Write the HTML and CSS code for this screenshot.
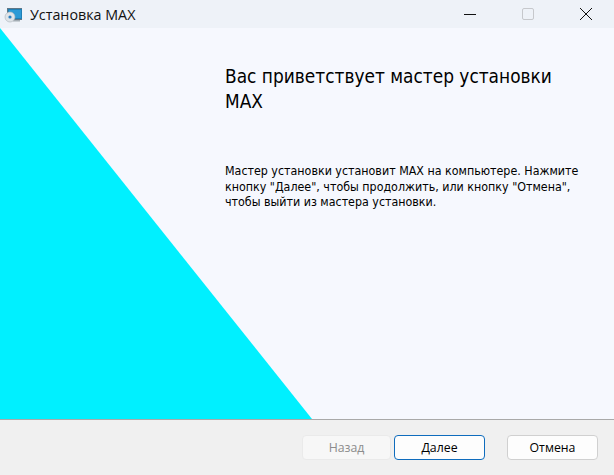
FILE: index.html
```html
<!DOCTYPE html>
<html lang="ru">
<head>
    <meta charset="UTF-8">
    <meta name="viewport" content="width=device-width, initial-scale=1.0">
    <title>Установка MAX</title>
    <link rel="stylesheet" href="styles.css">
</head>
<body>
    <div class="window">
        <div class="titlebar">
            <svg class="titlebar__icon" width="20" height="20" viewBox="0 0 20 20">
                <rect x="5.5" y="5.5" width="15" height="11" fill="#1f7fb5" stroke="#5f7787"/>
                <rect x="7" y="7" width="12" height="8" fill="#2b9ad6"/>
                <rect x="11" y="17" width="7" height="1.5" fill="#a4adb4"/>
                <circle cx="8" cy="14" r="5" fill="#dfe4e8" stroke="#a9b2b9" stroke-width="0.6"/>
                <circle cx="8" cy="14" r="1.6" fill="#2f7fc0"/>
            </svg>
            <span class="titlebar__title">Установка MAX</span>
            <div class="titlebar__controls">
                <svg class="titlebar__button" width="14" height="14" viewBox="0 0 14 14">
                    <path d="M1 7.5H13" stroke="#111" fill="none"/>
                </svg>
                <svg class="titlebar__button" width="14" height="14" viewBox="0 0 14 14">
                    <rect x="1.5" y="1.5" width="11" height="11" rx="1.5" fill="none" stroke="#c6c8cc"/>
                </svg>
                <svg class="titlebar__button" width="14" height="14" viewBox="0 0 14 14">
                    <path d="M1 1L13 13M13 1L1 13" stroke="#111" fill="none"/>
                </svg>
            </div>
        </div>

        <div class="main">
            <div class="main__text">
                <h1 class="main__heading">Вас приветствует мастер установки MAX</h1>
                <p class="main__description">Мастер установки установит MAX на компьютере. Нажмите кнопку "Далее", чтобы продолжить, или кнопку "Отмена", чтобы выйти из мастера установки.</p>
            </div>
        </div>

        <div class="footer">
            <button class="footer__button footer__button--disabled">Назад</button>
            <button class="footer__button footer__button--primary">Далее</button>
            <button class="footer__button footer__button--cancel">Отмена</button>
        </div>
    </div>
</body>
</html>
```

FILE: styles.css
```css
* {
    margin: 0;
    padding: 0;
    box-sizing: border-box;
}

body {
    background-color: #f0f0f0;
    color: #000;
    font-family: "DejaVu Sans", sans-serif;
}

.window {
    display: flex;
    flex-direction: column;
    width: 614px;
    height: 475px;
    overflow: hidden;
}

.titlebar {
    display: flex;
    align-items: center;
    height: 28px;
    padding-left: 2px;
    background-color: #eef2f8;
}

.titlebar__icon {
    margin-right: 8px;
    margin-top: -2px;
}

.titlebar__title {
    font-family: "Open Sans", sans-serif;
    font-size: 14.3px;
    color: #111;
}

.titlebar__controls {
    display: flex;
    gap: 44px;
    margin-left: auto;
    margin-right: 21px;
}

.main {
    position: relative;
    flex: 1;
    background-color: #f6f8fe;
}

/* cyan banner, sits under the text */
.main::before {
    content: "";
    position: absolute;
    left: 0;
    top: 0;
    width: 312px;
    height: 391px;
    background-color: #00f0ff;
    clip-path: polygon(0 0, 100% 100%, 0 100%);
}

.main__text {
    position: relative;
    width: 360px;
    margin-left: 225px;
    padding-top: 36px;
}

.main__heading {
    width: 340px;
    font-stretch: condensed;
    font-size: 18.9px;
    font-weight: 400;
    line-height: 24.5px;
    margin-bottom: 51px;
}

.main__description {
    font-stretch: condensed;
    font-size: 12.35px;
    line-height: 15.5px;
}

.footer {
    display: flex;
    align-items: flex-start;
    height: 56px;
    padding: 15px 16px 0 302px;
    border-top: 1px solid #a9a9a9;
}

.footer__button {
    width: 89px;
    height: 25px;
    background-color: #fdfdfd;
    border: 1px solid #d0d0d0;
    border-radius: 4px;
    font-family: "Open Sans", sans-serif;
    font-size: 12.3px;
    color: #000;
}

.footer__button--disabled {
    background-color: #f7f7f7;
    border-color: #eaeaea;
    color: #8c8c8c;
}

.footer__button--primary {
    width: 91px;
    margin-left: 3px;
    border-color: #0f6cbd;
}

.footer__button--cancel {
    width: 91px;
    margin-left: 22px;
}
```
